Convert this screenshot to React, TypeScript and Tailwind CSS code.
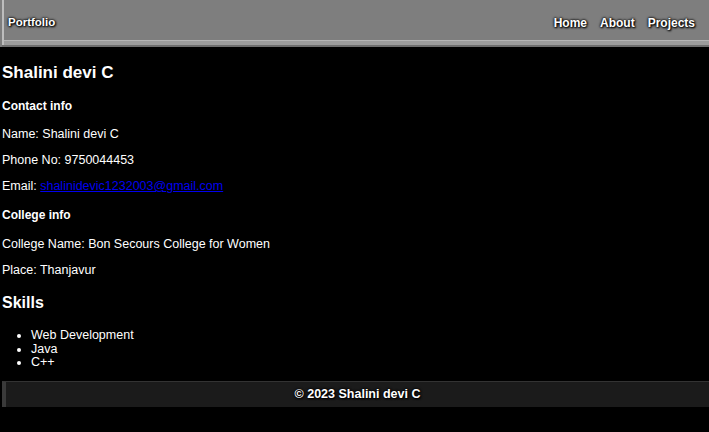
import React from "react";

const shadow = "[text-shadow:0_0_2px_#000,0_0_3px_#000,1px_1px_2px_#000]";

export default function App() {
  return (
    <div className="min-h-[432px] w-full bg-black text-white font-['Liberation_Sans',Arial,sans-serif]">
      <header className="h-[47px] bg-[#7e7e7e] pl-[2px] flex flex-col">
        <div className="flex-1 flex flex-col border-l-2 border-[#bdbdbd]">
          <div className="h-[40px] pt-[5px] flex items-center justify-between pl-[4px] pr-[14px]">
            <span className={`text-[11.5px] font-bold ${shadow}`}>Portfolio</span>
            <nav className="flex gap-[13px] text-[12px] font-bold">
              <span className={shadow}>Home</span>
              <span className={shadow}>About</span>
              <span className={shadow}>Projects</span>
            </nav>
          </div>
          <div className="h-[5px] border-t border-[#b5b5b5] bg-[#9c9c9c]" />
        </div>
        <div className="h-[2px] bg-[#6e6e6e]" />
      </header>

      <main className="px-[2px] text-[12.5px] leading-[14px]">
        <h1 className="mt-[16px] text-[17px] leading-[20px] font-bold">Shalini devi C</h1>
        <h3 className="mt-[16px] font-bold text-[12px]">Contact info</h3>
        <p className="mt-[14px]">Name: Shalini devi C</p>
        <p className="mt-[12px]">Phone No: 9750044453</p>
        <p className="mt-[12px]">
          Email:{" "}
          <a href="#" className="text-[#0000ee] underline">
            shalinidevic1232003@gmail.com
          </a>
        </p>
        <h3 className="mt-[15px] font-bold text-[12px]">College info</h3>
        <p className="mt-[15px]">College Name: Bon Secours College for Women</p>
        <p className="mt-[12px]">Place: Thanjavur</p>
        <h2 className="mt-[16px] text-[16px] leading-[20px] font-bold">Skills</h2>
        <ul className="mt-[16px] list-disc pl-[29px] leading-[13.5px]">
          <li>Web Development</li>
          <li>Java</li>
          <li>C++</li>
        </ul>
      </main>

      <footer className="mt-[11px] ml-[2px] h-[26px] bg-[#1b1b1b] border-t border-[#333] border-l-4 border-l-[#3a3a3a] flex items-center justify-center">
        <span className={`text-[12.5px] font-bold ${shadow}`}>© 2023 Shalini devi C</span>
      </footer>
    </div>
  );
}
